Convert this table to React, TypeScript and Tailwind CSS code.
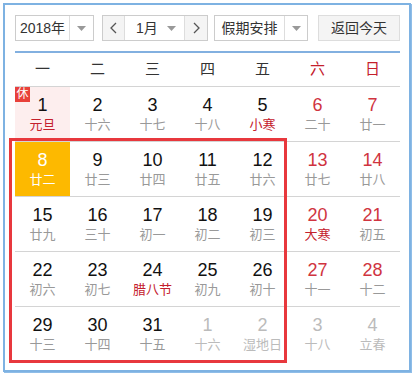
import React from 'react';

type Day = {
  n: number;
  lunar: string;
  weekend?: boolean;
  festival?: boolean;
  other?: boolean;
  today?: boolean;
  rest?: boolean;
};

const weekdays = ['一', '二', '三', '四', '五', '六', '日'];

const rows: Day[][] = [
  [
    { n: 1, lunar: '元旦', festival: true, rest: true },
    { n: 2, lunar: '十六' },
    { n: 3, lunar: '十七' },
    { n: 4, lunar: '十八' },
    { n: 5, lunar: '小寒', festival: true },
    { n: 6, lunar: '二十', weekend: true },
    { n: 7, lunar: '廿一', weekend: true },
  ],
  [
    { n: 8, lunar: '廿二', today: true },
    { n: 9, lunar: '廿三' },
    { n: 10, lunar: '廿四' },
    { n: 11, lunar: '廿五' },
    { n: 12, lunar: '廿六' },
    { n: 13, lunar: '廿七', weekend: true },
    { n: 14, lunar: '廿八', weekend: true },
  ],
  [
    { n: 15, lunar: '廿九' },
    { n: 16, lunar: '三十' },
    { n: 17, lunar: '初一' },
    { n: 18, lunar: '初二' },
    { n: 19, lunar: '初三' },
    { n: 20, lunar: '大寒', weekend: true, festival: true },
    { n: 21, lunar: '初五', weekend: true },
  ],
  [
    { n: 22, lunar: '初六' },
    { n: 23, lunar: '初七' },
    { n: 24, lunar: '腊八节', festival: true },
    { n: 25, lunar: '初九' },
    { n: 26, lunar: '初十' },
    { n: 27, lunar: '十一', weekend: true },
    { n: 28, lunar: '十二', weekend: true },
  ],
  [
    { n: 29, lunar: '十三' },
    { n: 30, lunar: '十四' },
    { n: 31, lunar: '十五' },
    { n: 1, lunar: '十六', other: true },
    { n: 2, lunar: '湿地日', other: true },
    { n: 3, lunar: '十八', other: true },
    { n: 4, lunar: '立春', other: true },
  ],
];

function Caret() {
  return (
    <svg width="9" height="5" viewBox="0 0 9 5">
      <path d="M0 0h9L4.5 5z" fill="#999" />
    </svg>
  );
}

function Cell({ d }: { d: Day }) {
  let bg = 'bg-white';
  if (d.today) bg = 'bg-[#fdb900]';
  else if (d.rest) bg = 'bg-[#fdeeee]';

  let numColor = 'text-[#111]';
  if (d.today) numColor = 'text-white';
  else if (d.other) numColor = 'text-[#bbb]';
  else if (d.weekend) numColor = 'text-[#d0343f]';

  let lunarColor = 'text-[#999]';
  if (d.today) lunarColor = 'text-white';
  else if (d.other) lunarColor = 'text-[#bbb]';
  else if (d.festival) lunarColor = 'text-[#c4202c]';

  return (
    <div className={`relative flex flex-col items-center justify-center ${bg}`}>
      {d.rest && (
        <span className="absolute left-0 top-0 w-[15px] h-[15px] bg-[#e8403a] text-white text-[12px] leading-[15px] text-center">
          休
        </span>
      )}
      <span className={`text-[18px] leading-[20px] ${numColor}`} style={{ fontFamily: '"Liberation Sans", Arial, sans-serif' }}>
        {d.n}
      </span>
      <span className={`mt-[1px] text-[13px] leading-[18px] ${lunarColor}`}>{d.lunar}</span>
    </div>
  );
}

export default function App() {
  return (
    <div
      className="w-[414px] h-[375px] bg-white p-[3px] overflow-hidden"
      style={{ fontFamily: '"Liberation Sans", "Noto Sans CJK SC", sans-serif' }}
    >
      <div className="relative w-[408px] h-[369px] border-2 border-[#7eb2e2] pl-[10px] pr-[9px] pt-[10px] shadow-[1px_1px_0_#8fbde8]">
        {/* 顶部工具栏 */}
        <div className="flex items-center h-[26px] text-[14px] text-[#333]">
          <div className="flex h-[26px] w-[79px] border border-[#ccc] bg-white">
            <div className="flex-1 flex items-center justify-center">2018年</div>
            <div className="w-[24px] flex items-center justify-center border-l border-[#ddd]">
              <Caret />
            </div>
          </div>
          <div className="ml-[8px] flex h-[26px] w-[106px] border border-[#ccc]">
            <div className="w-[22px] flex items-center justify-center bg-[#f4f4f4] border-r border-[#ddd] text-[#555]">
              <svg width="7" height="12" viewBox="0 0 7 12"><path d="M6 1L1 6l5 5" stroke="#555" strokeWidth="1.3" fill="none" /></svg>
            </div>
            <div className="flex-1 flex items-center justify-between pl-[11px] pr-[8px] bg-white">
              <span>1月</span>
              <Caret />
            </div>
            <div className="w-[23px] flex items-center justify-center bg-[#f4f4f4] border-l border-[#ddd]">
              <svg width="7" height="12" viewBox="0 0 7 12"><path d="M1 1l5 5-5 5" stroke="#555" strokeWidth="1.3" fill="none" /></svg>
            </div>
          </div>
          <div className="ml-[6px] flex h-[26px] w-[94px] border border-[#ccc] bg-white">
            <div className="flex-1 flex items-center justify-center">假期安排</div>
            <div className="w-[23px] flex items-center justify-center border-l border-[#ddd]">
              <Caret />
            </div>
          </div>
          <div className="ml-[10px] flex h-[26px] w-[82px] items-center justify-center border border-[#ddd] bg-[#f4f4f4]">
            返回今天
          </div>
        </div>

        <div className="mt-[10px] h-[2px] bg-[#82b0e0]" />

        {/* 星期 */}
        <div className="grid grid-cols-7 h-[34px] border-b border-[#d4d4d4] text-[15px]">
          {weekdays.map((w, i) => (
            <div key={w} className={`flex items-center justify-center ${i >= 5 ? 'text-[#c4202c]' : 'text-[#333]'}`}>
              {w}
            </div>
          ))}
        </div>

        {/* 日期 */}
        {rows.map((r, i) => (
          <div key={i} className={`grid grid-cols-7 h-[55px] ${i < rows.length - 1 ? 'border-b border-[#d4d4d4]' : ''}`}>
            {r.map((d, j) => (
              <Cell key={j} d={d} />
            ))}
          </div>
        ))}

        {/* 红框标注 */}
        <div className="absolute left-[4px] top-[133px] w-[278px] h-[225px] border-[3px] border-[#e8383d] pointer-events-none" />
      </div>
    </div>
  );
}
